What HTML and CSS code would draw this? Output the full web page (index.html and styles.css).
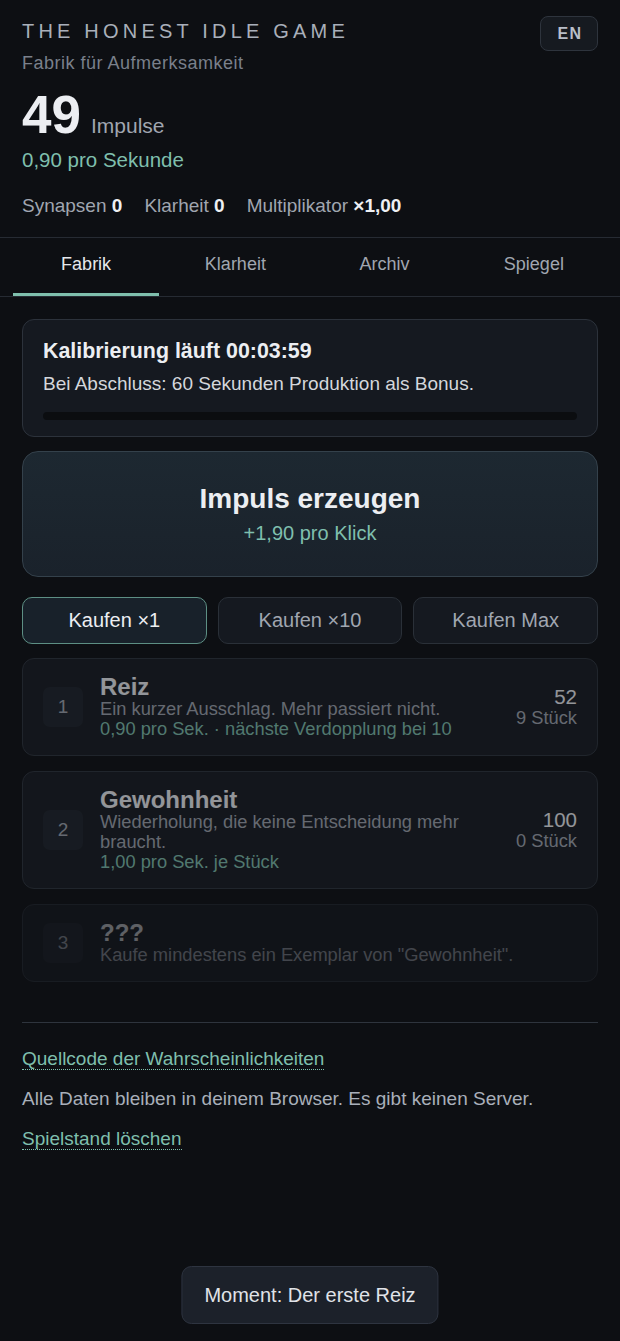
FILE: index.html
```html
<!DOCTYPE html>
<html lang="de">
<head>
<meta charset="utf-8">
<title>The Honest Idle Game</title>
<link rel="stylesheet" href="styles.css">
</head>
<body>
<header class="header">
  <div class="header-top">
    <div>
      <h1 class="title">THE HONEST IDLE GAME</h1>
      <div class="subtitle">Fabrik für Aufmerksamkeit</div>
    </div>
    <button class="lang">EN</button>
  </div>
  <div class="amount"><span class="amount-num">49</span><span class="amount-unit">Impulse</span></div>
  <div class="rate">0,90 pro Sekunde</div>
  <div class="stats">
    <span class="stat">Synapsen <b>0</b></span>
    <span class="stat">Klarheit <b>0</b></span>
    <span class="stat">Multiplikator <b>×1,00</b></span>
  </div>
</header>

<nav class="tabs">
  <div class="tab active">Fabrik</div>
  <div class="tab">Klarheit</div>
  <div class="tab">Archiv</div>
  <div class="tab">Spiegel</div>
</nav>

<main class="main">
  <section class="calib">
    <div class="calib-title">Kalibrierung läuft 00:03:59</div>
    <div class="calib-desc">Bei Abschluss: 60 Sekunden Produktion als Bonus.</div>
    <div class="progress"><div class="progress-fill" style="width:0%"></div></div>
  </section>

  <button class="impulse">
    <span class="impulse-title">Impuls erzeugen</span>
    <span class="impulse-sub">+1,90 pro Klick</span>
  </button>

  <div class="buy-row">
    <button class="buy active">Kaufen ×1</button>
    <button class="buy">Kaufen ×10</button>
    <button class="buy">Kaufen Max</button>
  </div>

  <div class="items">
    <div class="item dim">
      <div class="item-idx">1</div>
      <div class="item-body">
        <div class="item-name">Reiz</div>
        <div class="item-desc">Ein kurzer Ausschlag. Mehr passiert nicht.</div>
        <div class="item-rate">0,90 pro Sek. · nächste Verdopplung bei 10</div>
      </div>
      <div class="item-side">
        <div class="item-cost">52</div>
        <div class="item-count">9 Stück</div>
      </div>
    </div>
    <div class="item dim">
      <div class="item-idx">2</div>
      <div class="item-body">
        <div class="item-name">Gewohnheit</div>
        <div class="item-desc">Wiederholung, die keine Entscheidung mehr braucht.</div>
        <div class="item-rate">1,00 pro Sek. je Stück</div>
      </div>
      <div class="item-side">
        <div class="item-cost">100</div>
        <div class="item-count">0 Stück</div>
      </div>
    </div>
    <div class="item locked">
      <div class="item-idx">3</div>
      <div class="item-body">
        <div class="item-name">???</div>
        <div class="item-desc">Kaufe mindestens ein Exemplar von "Gewohnheit".</div>
      </div>
    </div>
  </div>

  <footer class="footer">
    <p><a class="link" href="#">Quellcode der Wahrscheinlichkeiten</a></p>
    <p class="note">Alle Daten bleiben in deinem Browser. Es gibt keinen Server.</p>
    <p><a class="link" href="#">Spielstand löschen</a></p>
  </footer>
</main>

<div class="toast">Moment: Der erste Reiz</div>
</body>
</html>
```

FILE: styles.css
```css
* { box-sizing: border-box; }
html, body {
  margin: 0;
  padding: 0;
  background: #0d0f13;
  color: #e6e8ec;
  font-family: "Liberation Sans", Arial, sans-serif;
}
button { font-family: inherit; cursor: pointer; }

.header { padding: 16px 22px 0; }
.header-top { display: flex; justify-content: space-between; align-items: flex-start; }
.title {
  margin: 1px 0 0;
  font-size: 20px;
  line-height: 28px;
  font-weight: 400;
  letter-spacing: 4.2px;
  color: #a9afba;
}
.subtitle {
  margin-top: 7px;
  font-size: 18px;
  line-height: 22px;
  letter-spacing: 0.5px;
  color: #7a808b;
}
.lang {
  width: 58px;
  height: 35px;
  background: #161a20;
  border: 1px solid #2e343d;
  border-radius: 8px;
  color: #b8bec8;
  font-size: 16px;
  font-weight: 700;
  letter-spacing: 1.5px;
  padding: 0 0 0 2px;
}
.amount {
  margin-top: 11px;
  display: flex;
  align-items: baseline;
  height: 60px;
  line-height: 60px;
}
.amount-num { font-size: 53px; font-weight: 700; color: #eceef2; }
.amount-unit { font-size: 21px; line-height: 24px; color: #a0a6b0; margin-left: 10px; }
.rate {
  margin-top: 2px;
  font-size: 20.5px;
  line-height: 26px;
  color: #7fbfad;
}
.stats {
  margin-top: 21px;
  font-size: 19px;
  line-height: 24px;
  color: #a0a6b0;
  display: flex;
  gap: 22px;
}
.stats b { color: #eef0f3; }

.tabs {
  margin-top: 19px;
  border-top: 1px solid #262b33;
  border-bottom: 1px solid #262b33;
  display: flex;
  gap: 3px;
  padding: 0 13px;
}
.tab {
  flex: 1;
  text-align: center;
  font-size: 18px;
  line-height: 24px;
  padding: 14px 0 17px;
  color: #a0a6b0;
  border-bottom: 3px solid transparent;
}
.tab.active { color: #e6e8ec; border-bottom-color: #7fbfad; }

.main { padding: 22px 22px 120px; }

.calib {
  background: #151920;
  border: 1px solid #2c323b;
  border-radius: 12px;
  padding: 18px 20px 16px;
}
.calib-title {
  font-size: 21.4px;
  line-height: 26px;
  font-weight: 700;
  color: #eceef2;
}
.calib-desc {
  margin-top: 8px;
  font-size: 19px;
  line-height: 24px;
  color: #d4d7dc;
}
.progress {
  margin-top: 16px;
  height: 8px;
  border-radius: 4px;
  background: #0b0d10;
  overflow: hidden;
}
.progress-fill { height: 100%; background: #7fbfad; }

.impulse {
  margin-top: 14px;
  width: 100%;
  display: flex;
  flex-direction: column;
  align-items: center;
  gap: 6px;
  padding: 31px 20px;
  border: 1px solid #34414b;
  border-radius: 16px;
  background: linear-gradient(180deg, #1d2831 0%, #1a222b 100%);
}
.impulse-title {
  font-size: 28px;
  line-height: 32px;
  font-weight: 700;
  color: #eceef2;
}
.impulse-sub {
  font-size: 20px;
  line-height: 24px;
  color: #7fbfad;
}

.buy-row {
  margin-top: 20px;
  display: grid;
  grid-template-columns: repeat(3, 1fr);
  gap: 11px;
}
.buy {
  height: 47px;
  background: #151920;
  border: 1px solid #2a3038;
  border-radius: 10px;
  color: #a0a6b0;
  font-size: 20px;
}
.buy.active {
  background: #18212a;
  border-color: #5d8f84;
  color: #eceef2;
}

.items {
  margin-top: 14px;
  display: flex;
  flex-direction: column;
  gap: 15px;
}
.item {
  display: flex;
  align-items: center;
  gap: 17px;
  background: #181c23;
  border: 1px solid #2e343d;
  border-radius: 12px;
  padding: 16px 20px;
}
.item.dim { opacity: 0.6; }
.item.locked { opacity: 0.36; }
.item-idx {
  flex: none;
  width: 40px;
  height: 40px;
  border-radius: 7px;
  background: #1f242c;
  color: #a0a6b0;
  font-size: 19px;
  display: flex;
  align-items: center;
  justify-content: center;
}
.item-body { flex: 1; min-width: 0; }
.item-name {
  font-size: 24px;
  line-height: 24px;
  font-weight: 700;
  color: #eceef2;
}
.item-desc {
  font-size: 18.3px;
  line-height: 20px;
  color: #a0a6b0;
}
.item-rate {
  font-size: 18.3px;
  line-height: 20px;
  color: #7fbfad;
}
.item-side { flex: none; text-align: right; }
.item-cost { font-size: 20.5px; line-height: 22px; color: #eceef2; }
.item-count { font-size: 18.3px; line-height: 20px; color: #a0a6b0; }

.footer {
  margin-top: 40px;
  border-top: 1px solid #2e343d;
  padding-top: 24px;
}
.footer p {
  margin: 0 0 16px;
  font-size: 19px;
  line-height: 24px;
}
.link {
  color: #7fbfad;
  text-decoration: none;
  border-bottom: 1px dotted #7fbfad;
}
.note { color: #a9afba; }

.toast {
  position: fixed;
  left: 50%;
  bottom: 17px;
  transform: translateX(-50%);
  background: #1c212a;
  border: 1px solid #2e3440;
  border-radius: 10px;
  padding: 16px 22px;
  font-size: 20px;
  line-height: 24px;
  color: #e0e3e8;
  white-space: nowrap;
}
```
